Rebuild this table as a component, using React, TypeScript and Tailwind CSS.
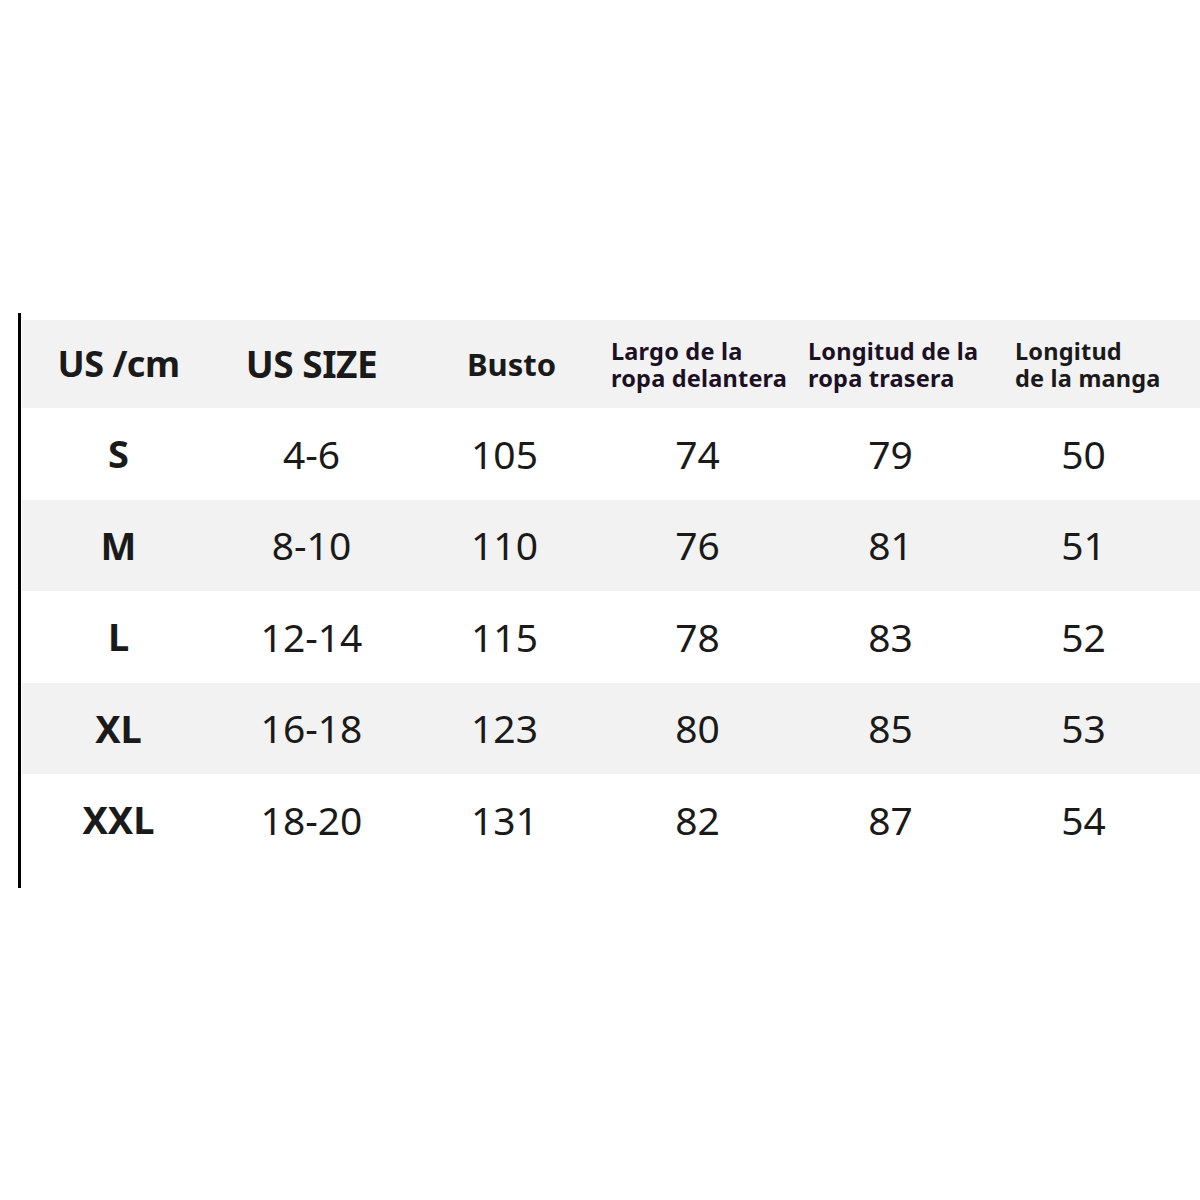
import React from "react";

const rows = [
  ["S", "4-6", "105", "74", "79", "50"],
  ["M", "8-10", "110", "76", "81", "51"],
  ["L", "12-14", "115", "78", "83", "52"],
  ["XL", "16-18", "123", "80", "85", "53"],
  ["XXL", "18-20", "131", "82", "87", "54"],
];

function TwoLine({ a, b, color }: { a: string; b: string; color: string }) {
  return (
    <div className={`pl-[10px] pt-[2px] font-bold text-[23.5px] tracking-[0.2px] whitespace-nowrap flex flex-col ${color}`}>
      <div className="h-[27px] leading-[27px]">{a}</div>
      <div className="h-[27px] leading-[27px]">{b}</div>
    </div>
  );
}

export default function App() {
  return (
    <div className="w-[1200px] h-[1200px] bg-white flex flex-col" style={{ fontFamily: '"Noto Sans", "Open Sans", sans-serif' }}>
      <div className="h-[313px]" />
      <div className="flex">
        <div className="w-[18px]" />
        <div className="w-[3px] h-[575px] bg-black" />
        <div className="flex-1 flex flex-col pt-[7px] pl-[1px]">
          <div className="h-[88px] bg-[#f2f2f2] grid grid-cols-[193px_193px_193px_197px_207px_1fr] items-center text-[#1a1a1a]">
            <div className="text-center font-bold text-[36px] tracking-[-0.5px]">US /cm</div>
            <div className="text-center font-bold text-[37px] tracking-[-0.5px]">US SIZE</div>
            <div className="text-center font-bold text-[31px] pl-[14px]">Busto</div>
            <TwoLine a="Largo de la" b="ropa delantera" color="text-[#1c1024]" />
            <TwoLine a="Longitud de la" b="ropa trasera" color="text-[#1c1024]" />
            <TwoLine a="Longitud" b="de la manga" color="text-[#1a1a1a]" />
          </div>
          {rows.map((r, i) => (
            <div
              key={r[0]}
              className={`h-[91.5px] grid grid-cols-[193px_193px_193px_193px_193px_193px] items-center text-[#1a1a1a] ${i % 2 === 1 ? "bg-[#f2f2f2]" : "bg-white"}`}
            >
              <div className="text-center font-bold text-[38px]">{r[0]}</div>
              {r.slice(1).map((c, j) => (
                <div key={j} className="text-center text-[39px]">{c}</div>
              ))}
            </div>
          ))}
        </div>
      </div>
    </div>
  );
}
